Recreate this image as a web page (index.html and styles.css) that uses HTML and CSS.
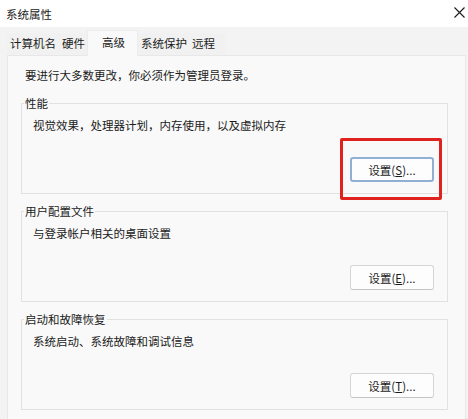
FILE: index.html
```html
<!DOCTYPE html>
<html lang="zh-CN">
<head>
<meta charset="utf-8">
<title>系统属性</title>
<link rel="stylesheet" href="styles.css">
</head>
<body>
<div class="window">
  <div class="titlebar">
    <span class="title">系统属性</span>
    <svg class="close" width="11" height="11" viewBox="0 0 11 11"><path d="M0.5 0.5 L10.5 10.5 M10.5 0.5 L0.5 10.5" stroke="#1a1a1a" stroke-width="1.1" fill="none"/></svg>
  </div>
  <div class="tabs">
    <div class="tab first">计算机名</div>
    <div class="tab">硬件</div>
    <div class="tab active">高级</div>
    <div class="tab">系统保护</div>
    <div class="tab last">远程</div>
  </div>
  <div class="panel">
    <p class="intro">要进行大多数更改，你必须作为管理员登录。</p>
    <fieldset class="group">
      <legend>性能</legend>
      <p class="desc">视觉效果，处理器计划，内存使用，以及虚拟内存</p>
      <div class="actions">
        <button class="btn focused">设置(<u>S</u>)...</button>
        <div class="highlight"></div>
      </div>
    </fieldset>
    <fieldset class="group">
      <legend>用户配置文件</legend>
      <p class="desc">与登录帐户相关的桌面设置</p>
      <div class="actions">
        <button class="btn">设置(<u>E</u>)...</button>
      </div>
    </fieldset>
    <fieldset class="group">
      <legend>启动和故障恢复</legend>
      <p class="desc">系统启动、系统故障和调试信息</p>
      <div class="actions">
        <button class="btn">设置(<u>T</u>)...</button>
      </div>
    </fieldset>
  </div>
</div>
</body>
</html>
```
FILE: styles.css
```css
html, body {
  margin: 0;
  padding: 0;
}
body {
  width: 468px;
  height: 419px;
  overflow: hidden;
  background: #f3f3f3;
  font-family: "Noto Sans CJK SC", "Noto Sans", sans-serif;
  font-size: 11.5px;
  color: #1b1b1b;
}
.window {
  display: flex;
  flex-direction: column;
  height: 419px;
}
.titlebar {
  height: 27px;
  background: #ffffff;
  display: flex;
  align-items: center;
  justify-content: space-between;
  padding: 0 3px 0 6px;
  flex: none;
}
.title {
  font-size: 11.5px;
  line-height: 16px;
}
.close {
  display: block;
  margin-top: -3px;
}
.tabs {
  display: flex;
  align-items: flex-end;
  height: 28px;
  margin-left: 7px;
  flex: none;
}
.tab {
  line-height: 16px;
  padding: 0 2px 4px 3px;
  background: #f1f1f1;
  height: 22px;
  box-sizing: border-box;
  display: flex;
  align-items: flex-end;
}
.tab.first {
  padding-left: 3px;
  padding-right: 3px;
}
.tab.active {
  background: #f9f9f9;
  padding: 0 12px 6px 14px;
  height: 26px;
  margin-bottom: -1px;
  position: relative;
  border: 1px solid #ececec;
  border-bottom: none;
}
.tab.last {
  padding-right: 10px;
}
.panel {
  flex: 1;
  margin: 0 2px 0 7px;
  background: #f9f9f9;
  border: 1px solid #e8e8e8;
  border-bottom: none;
  padding: 11px 17px 0 13px;
}
.intro {
  margin: 0 0 12px 4px;
  line-height: 16px;
}
.group {
  margin: 0 0 9px 0;
  border: 1px solid #e1e1e1;
  padding: 6px 13px 11px 11px;
  min-width: 0;
}
.group legend {
  margin-left: -9px;
  padding: 0 1px;
  line-height: 16px;
}
.desc {
  margin: 0;
  line-height: 16px;
}
.actions {
  display: flex;
  justify-content: flex-end;
  margin-top: 24px;
  position: relative;
}
.btn {
  width: 84px;
  height: 25px;
  font-family: inherit;
  font-size: 11.5px;
  color: #1b1b1b;
  background: #fdfdfd;
  border: 1px solid #d5d5d5;
  border-bottom-color: #c4c4c4;
  border-radius: 3px;
  padding: 0;
}
.btn u {
  text-decoration-thickness: 1px;
}
.btn.focused {
  border: 2px solid #8fb0d3;
}
.highlight {
  position: absolute;
  right: -8px;
  top: -19px;
  width: 102px;
  height: 62px;
  box-sizing: border-box;
  border: 3px solid #e0221e;
  border-radius: 2px;
  pointer-events: none;
}
```
